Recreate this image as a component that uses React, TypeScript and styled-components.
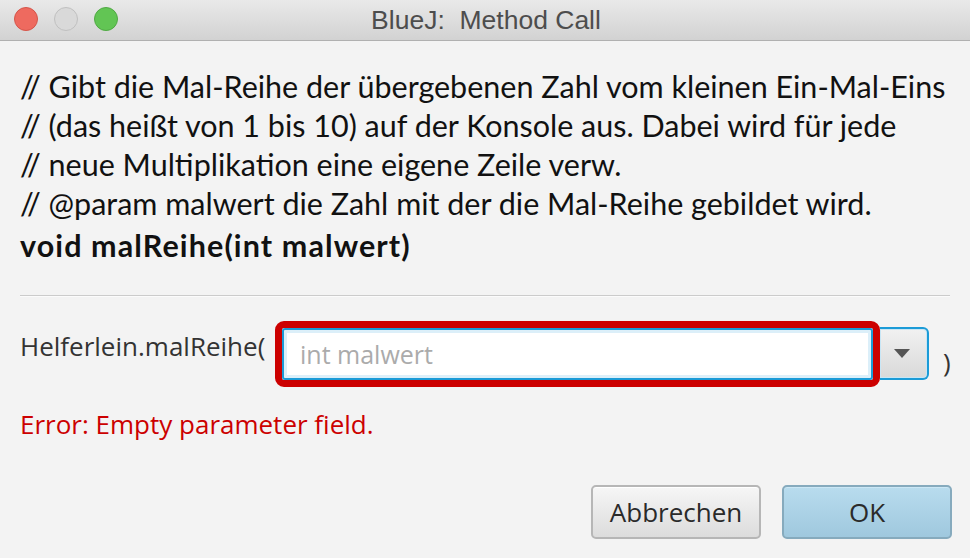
import React from "react";
import styled, { createGlobalStyle } from "styled-components";

const GlobalStyle = createGlobalStyle`
  html, body {
    margin: 0;
    padding: 0;
    background: #f3f3f3;
  }
  * {
    box-sizing: border-box;
  }
`;

const Window = styled.div`
  width: 970px;
  height: 558px;
  display: flex;
  flex-direction: column;
  background: #f3f3f3;
  overflow: hidden;
`;

const TitleBar = styled.div`
  position: relative;
  height: 41px;
  flex-shrink: 0;
  display: flex;
  align-items: center;
  justify-content: center;
  background: linear-gradient(#e9e9e9, #d2d2d2);
  border-bottom: 1px solid #b0b0b0;
`;

const Lights = styled.div`
  position: absolute;
  left: 14px;
  top: 7px;
  display: flex;
  gap: 16px;
`;

const Light = styled.span<{ $fill: string; $edge: string }>`
  width: 24px;
  height: 24px;
  border-radius: 50%;
  background: ${(p) => p.$fill};
  border: 1px solid ${(p) => p.$edge};
`;

const Title = styled.div`
  font-family: "Liberation Sans", Arial, sans-serif;
  font-size: 26.5px;
  color: #4d4d4d;
  margin-left: 2px;
`;

const Body = styled.div`
  flex: 1;
  display: flex;
  flex-direction: column;
  padding: 26px 18px 19px 20px;
`;

const Doc = styled.div`
  font-family: Lato, "Noto Sans", sans-serif;
  font-size: 30.5px;
  line-height: 39px;
  color: #111;
  white-space: nowrap;
`;

const Signature = styled.div`
  font-weight: 700;
  letter-spacing: 1.1px;
  margin-top: 3px;
`;

const Separator = styled.hr`
  margin: 30px 2px 0 0;
  border: none;
  height: 2px;
  border-top: 1px solid #cbcbcb;
  border-bottom: 1px solid #fbfbfb;
`;

const CallRow = styled.div`
  display: flex;
  align-items: flex-start;
  margin-top: 24px;
`;

const CallLabel = styled.span`
  font-family: "Open Sans", sans-serif;
  font-size: 26px;
  color: #333;
  margin-top: 7px;
  width: 255px;
  white-space: nowrap;
`;

const FocusRing = styled.div`
  width: 605px;
  height: 66px;
  border: 7px solid #cc0000;
  border-radius: 9px;
  display: flex;
`;

const ParamInput = styled.input`
  flex: 1;
  min-width: 0;
  height: 52px;
  border: 2px solid #1b9bd7;
  border-radius: 3px;
  box-shadow: inset 0 0 0 3px #dceff9;
  background: #fff;
  padding: 0 16px;
  font-family: "Open Sans", sans-serif;
  font-size: 25px;
  color: #333;
  outline: none;

  &::placeholder {
    color: #ababab;
  }
`;

const ComboButton = styled.div`
  width: 49px;
  height: 53px;
  margin-top: 6px;
  border: 2px solid #1b9bd7;
  border-left: none;
  border-radius: 0 6px 6px 0;
  background: linear-gradient(#f1f1f1, #d9d9d9);
  box-shadow: inset 0 0 0 1px #c8e6f5;
  display: flex;
  align-items: center;
  justify-content: center;
  padding-right: 3px;
`;

const Arrow = styled.span`
  width: 0;
  height: 0;
  border-left: 8px solid transparent;
  border-right: 8px solid transparent;
  border-top: 9px solid #555;
`;

const Paren = styled.span`
  font-family: "Open Sans", sans-serif;
  font-size: 26px;
  color: #333;
  margin: 23px 0 0 14px;
`;

const ErrorText = styled.div`
  margin-top: 19px;
  font-family: "Open Sans", sans-serif;
  font-size: 26px;
  color: #cc0000;
`;

const Actions = styled.div`
  margin-top: auto;
  display: flex;
  justify-content: flex-end;
  gap: 21px;
`;

const Button = styled.button<{ $primary?: boolean }>`
  width: 170px;
  height: 54px;
  border-radius: 5px;
  font-family: "Open Sans", sans-serif;
  font-size: 26px;
  color: #2a2a2a;
  cursor: pointer;
  border: 2px solid ${(p) => (p.$primary ? "#86aabd" : "#b6b6b6")};
  background: ${(p) =>
    p.$primary
      ? "linear-gradient(#b8dcee, #9fc8de)"
      : "linear-gradient(#f6f6f6, #dcdcdc)"};
  box-shadow: inset 0 1px 0 ${(p) => (p.$primary ? "#cbe7f5" : "#fff")};
`;

const App = () => {
  return (
    <>
      <GlobalStyle />
      <Window>
        <TitleBar>
          <Lights>
            <Light $fill="#ee6a5f" $edge="#d5554a" />
            <Light $fill="#d9d9d9" $edge="#c0c0c0" />
            <Light $fill="#62c554" $edge="#50a944" />
          </Lights>
          <Title>BlueJ:&nbsp; Method Call</Title>
        </TitleBar>
        <Body>
          <Doc>
            <div>// Gibt die Mal-Reihe der übergebenen Zahl vom kleinen Ein-Mal-Eins</div>
            <div>// (das heißt von 1 bis 10) auf der Konsole aus. Dabei wird für jede</div>
            <div>// neue Multiplikation eine eigene Zeile verw.</div>
            <div>// @param malwert die Zahl mit der die Mal-Reihe gebildet wird.</div>
            <Signature>void malReihe(int malwert)</Signature>
          </Doc>
          <Separator />
          <CallRow>
            <CallLabel>Helferlein.malReihe(</CallLabel>
            <FocusRing>
              <ParamInput placeholder="int malwert" />
            </FocusRing>
            <ComboButton>
              <Arrow />
            </ComboButton>
            <Paren>)</Paren>
          </CallRow>
          <ErrorText>Error: Empty parameter field.</ErrorText>
          <Actions>
            <Button>Abbrechen</Button>
            <Button $primary>OK</Button>
          </Actions>
        </Body>
      </Window>
    </>
  );
};

export default App;
